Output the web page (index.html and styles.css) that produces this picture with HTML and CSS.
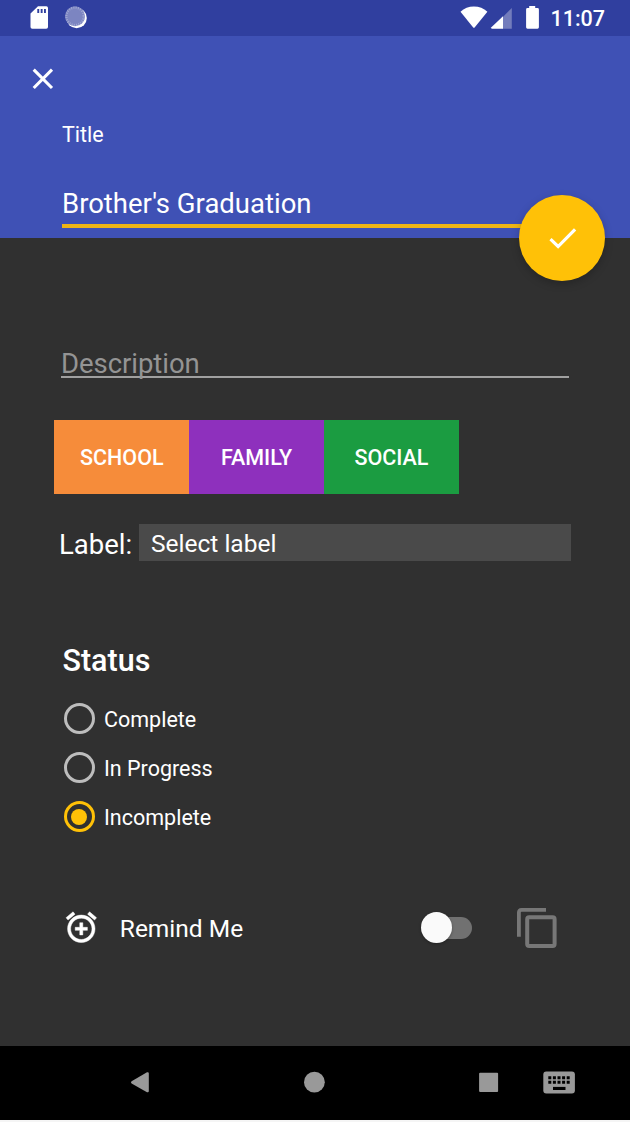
FILE: index.html
```html
<!DOCTYPE html>
<html lang="en">
<head>
<meta charset="utf-8">
<title>Edit task</title>
<link rel="stylesheet" href="styles.css">
</head>
<body>
<div class="screen">
  <div class="statusbar">
    <svg class="status-left" viewBox="0 0 100 36" width="100" height="36">
      <path fill="#fff" fill-rule="evenodd" d="M38 6.200h8.300q1.700 0 1.700 1.700v19q0 1.800-1.800 1.800H32.300q-1.800 0-1.800-1.800V13.500zM37.300 9v4h1.900V9zM40.700 9v4h1.900V9zM44 9v4h1.900V9z"/>
      <circle cx="76.600" cy="18" r="10.200" fill="#fff"/>
      <circle cx="75" cy="16.300" r="10" fill="#7c85c1"/>
      <circle cx="75" cy="16.300" r="8.700" fill="none" stroke="#a0a7d3" stroke-width="2.200" stroke-dasharray="1 1.300"/>
    </svg>
    <svg class="status-icons" viewBox="455 0 90 36" width="90" height="36">
      <path fill="#fff" d="M460.500 11.700Q466 6.500 473.900 6.500T487.400 11.700L474.800 27.200q-.9 1-1.800 0z"/>
      <path fill="#737cbc" d="M511.800 8v20.700h-9V17z"/>
      <path fill="#fff" d="M503 16.200v12.500h-11q-1.500-.4-.6-1.500z"/>
      <path fill="#fff" d="M529.200 8V6h6v2h2.300q1.400 0 1.400 1.400v17.900q0 1.400-1.400 1.400h-10q-1.400 0-1.400-1.400V9.400Q526.100 8 527.500 8z"/>
    </svg>
    <span class="clock">11:07</span>
  </div>

  <header class="header">
    <svg class="close" viewBox="0 0 22 22" width="22" height="22"><path d="M1.700 1.700 20 20M20 1.700 1.700 20" stroke="#fff" stroke-width="3.100" fill="none"/></svg>
    <div class="title-label"><span>Title</span></div>
    <div class="title-input"><span>Brother's Graduation</span></div>
    <button class="fab" aria-label="Save">
      <svg viewBox="0 0 28 22" width="28" height="22"><path d="m1.500 12.200 7.600 7.300L26.100 2.300" stroke="#fff" stroke-width="3.200" fill="none"/></svg>
    </button>
  </header>

  <main class="form">
    <div class="description"><span>Description</span></div>
    <div class="tags">
      <div class="tag school"><span>SCHOOL</span></div>
      <div class="tag family"><span>FAMILY</span></div>
      <div class="tag social"><span>SOCIAL</span></div>
    </div>
    <div class="label-row">
      <span>Label:</span>
      <div class="select"><span>Select label</span></div>
    </div>
    <h2 class="status-heading"><span>Status</span></h2>
    <div class="radios">
      <div class="radio"><i class="ring"></i><span>Complete</span></div>
      <div class="radio"><i class="ring"></i><span>In Progress</span></div>
      <div class="radio"><i class="ring on"></i><span>Incomplete</span></div>
    </div>
    <div class="remind">
      <svg class="alarm" viewBox="0 0 24 24" width="36.600" height="36.600"><path fill="#fff" stroke="#fff" stroke-width=".3" d="M7.880 3.390 6.600 1.860 2 5.710l1.290 1.530 4.590-3.850zM22 5.720l-4.600-3.860-1.290 1.530 4.600 3.860L22 5.720zM12 4c-4.970 0-9 4.030-9 9s4.020 9 9 9c4.970 0 9-4.030 9-9s-4.030-9-9-9zm0 16c-3.870 0-7-3.130-7-7s3.130-7 7-7 7 3.130 7 7-3.130 7-7 7zm1-11h-2v3H8v2h3v3h2v-3h3v-2h-3V9z"/></svg>
      <span class="remind-text">Remind Me</span>
      <div class="switch"><i class="thumb"></i></div>
      <svg class="copy" viewBox="0 0 40 40" width="40" height="40" fill="none" stroke="#777">
        <path d="M1.900 28.800V4.500Q1.900 1.900 4.500 1.900H29" stroke-width="3.800"/>
        <rect x="10.200" y="9.200" width="27.400" height="28.800" rx="2" stroke-width="4"/>
      </svg>
    </div>
  </main>

  <nav class="navbar">
    <svg viewBox="0 1046 630 74" width="630" height="74" fill="#999">
      <path d="M131.600 1081.300 147 1072.300q1.800-.6 1.800 1.100v17.700q0 1.700-1.800 1.100L131.600 1083.400q-1.400-1 0-2.100z"/>
      <circle cx="314.400" cy="1082.200" r="10.400"/>
      <rect x="479.100" y="1072.800" width="19" height="19.200" rx="1"/>
      <rect x="543.300" y="1071.400" width="31.600" height="22" rx="3"/>
      <path stroke="#000" stroke-width="3" stroke-dasharray="3 1.600" d="M548.300 1077.700H570M548.300 1082.300H570"/>
      <path fill="#000" d="M553 1086.900h12.500v3.100H553z"/>
    </svg>
  </nav>
</div>
</body>
</html>
```
FILE: styles.css
```css
* { box-sizing: border-box; }
body { margin: 0; background: #f5f5f5; font-family: Roboto, "Liberation Sans", sans-serif; color: #fff; }
.screen { width: 630px; height: 1122px; display: flex; flex-direction: column; overflow: hidden; }
span { white-space: nowrap; }
svg { display: block; flex: none; }

.statusbar { height: 36px; flex: none; background: #303f9f; display: flex; align-items: center; }
.status-icons { margin-left: 355px; }
.clock { margin-left: 5.500px; padding-top: 2px; font-size: 21.500px; font-weight: 500; line-height: 34px; }

.header { position: relative; height: 202px; flex: none; background: #3f51b5; padding: 32px 61px 0 61.500px; }
.close { margin-left: -30px; }
.title-label { margin-top: 33px; font-size: 21.500px; line-height: 24px; padding-left: .5px; }
.title-input { margin-top: 34px; height: 47px; padding: 6px 0 0 .5px; border-bottom: 4px solid #efb515; font-size: 27.500px; line-height: 34px; }
.fab { position: absolute; left: 519px; top: 159px; width: 86px; height: 86px; border: 0; border-radius: 50%; background: #ffc107; display: flex; align-items: center; justify-content: center; box-shadow: 0 3px 9px rgba(0,0,0,.22); padding: 0; }
.fab svg { margin-left: 1px; }

.form { height: 808px; flex: none; background: #303030; padding-top: 104px; }
.description { margin-left: 61px; width: 507.500px; height: 36px; border-bottom: 2px solid #a0a0a0; font-size: 27.500px; line-height: 44px; letter-spacing: -.05px; color: #949494; }
.tags { display: flex; margin: 42px 0 0 54.300px; height: 73.500px; }
.tag { width: 135px; display: flex; align-items: center; justify-content: center; font-size: 21.500px; font-weight: 500; padding-top: 2px; }
.school { background: #f68c3a; }
.family { background: #8e30bd; width: 134.700px; }
.social { background: #1b9c41; }
.label-row { display: flex; margin: 30.500px 0 0 59px; height: 37px; align-items: center; font-size: 27.500px; }
.label-row > span { width: 79.500px; padding-top: 3px; }
.select { width: 432px; height: 37px; background: #4a4a4a; padding-left: 12.500px; font-size: 24.500px; line-height: 39px; }
.status-heading { margin: 81px 0 0 62.500px; font-size: 30.500px; font-weight: 500; line-height: 38px; }
.radios { margin: 14px 0 0 63.500px; }
.radio { display: flex; align-items: center; height: 49px; gap: 9.500px; font-size: 21.500px; }
.radio span { padding-top: 2px; }
.ring { width: 31px; height: 31px; border: 3px solid #bdbdbd; border-radius: 50%; display: flex; align-items: center; justify-content: center; }
.ring.on { border-color: #ffc107; }
.ring.on::after { content: ""; width: 16px; height: 16px; border-radius: 50%; background: #ffc107; }
.remind { display: flex; align-items: center; margin: 67px 0 0 62.700px; height: 40px; font-size: 24.500px; }
.alarm { margin-top: -2px; }
.remind-text { width: 301px; margin-left: 20.500px; }
.switch { width: 51px; height: 31px; margin-top: -1px; display: flex; align-items: center; }
.switch::after { content: ""; width: 35px; height: 22px; margin-left: -15px; background: #717171; border-radius: 0 11px 11px 0; }
.thumb { width: 31px; height: 31px; border-radius: 50%; background: #fafafa; flex: none; position: relative; z-index: 1; box-shadow: 0 1px 3px rgba(0,0,0,.3); }
.copy { margin-left: 45px; }

.navbar { height: 74px; flex: none; background: #000; }
```
